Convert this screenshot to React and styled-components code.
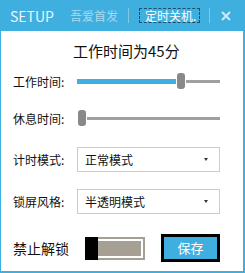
import styled, { createGlobalStyle } from "styled-components";

const GlobalStyle = createGlobalStyle`
  html, body {
    margin: 0;
    padding: 0;
    background: #ffffff;
  }
  body {
    font-family: "Noto Sans CJK SC", "Microsoft YaHei", "Liberation Sans", sans-serif;
  }
`;

const BLUE = "#3fafe0";

const Window = styled.div`
  width: 245px;
  height: 273px;
  box-sizing: border-box;
  border: 1px solid ${BLUE};
  border-top: none;
  border-right-width: 2px;
  border-bottom-width: 2px;
  display: flex;
  flex-direction: column;
  background: #fff;
`;

const Header = styled.div`
  height: 31px;
  margin: 0 -2px 0 -1px;
  background: ${BLUE};
  display: flex;
  align-items: center;
  padding-left: 10px;
`;

const Brand = styled.div`
  font-size: 14px;
  color: #e8f5fc;
  margin-right: 15px;
`;

const Tab = styled.div`
  font-size: 12px;
  line-height: 13px;
  color: ${(p) => (p.active ? "#ffffff" : "#a8d9f0")};
  padding: ${(p) => (p.active ? "0 3px 0 5px" : "0")};
  border: 1px dashed ${(p) => (p.active ? "#1f4d6b" : "transparent")};
`;

const Sep = styled.div`
  width: 1px;
  height: 15px;
  background: #7fc8ea;
  margin: 0 ${(p) => p.right}px 0 ${(p) => p.left}px;
`;

const Close = styled.svg`
  width: 10px;
  height: 10px;
`;

const Body = styled.div`
  display: flex;
  flex-direction: column;
  padding-left: 12px;
`;

const Title = styled.div`
  margin-top: 10px;
  height: 20px;
  line-height: 20px;
  font-size: 15px;
  color: #111;
  padding-left: 60px;
`;

const Row = styled.div`
  display: flex;
  align-items: center;
  margin-top: ${(p) => p.top}px;
  height: ${(p) => p.h}px;
`;

const Label = styled.div`
  width: ${(p) => p.w || 64}px;
  flex-shrink: 0;
  font-size: ${(p) => p.size || 12}px;
  color: #111;
`;

const SliderBox = styled.div`
  width: 143px;
  display: flex;
  align-items: center;
`;

const Fill = styled.div`
  height: 5px;
  background: ${BLUE};
`;

const Thumb = styled.div`
  width: 8px;
  height: 16px;
  border-radius: 3px;
  background: #898989;
  margin: 0 1px;
  flex-shrink: 0;
`;

const Rest = styled.div`
  flex: 1;
  height: 3px;
  background: #a0a0a0;
`;

const Select = styled.div`
  width: 143px;
  height: 25px;
  box-sizing: border-box;
  border: 1px solid #cccccc;
  display: flex;
  align-items: center;
  justify-content: space-between;
  padding: 0 11px 0 7px;
  font-size: 12px;
  color: #111;
`;

const Arrow = styled.div`
  width: 0;
  height: 0;
  border-left: 2.5px solid transparent;
  border-right: 2.5px solid transparent;
  border-top: 3.5px solid #333;
`;

const Toggle = styled.div`
  width: 60px;
  height: 23px;
  box-sizing: border-box;
  border: 2px solid #a59f94;
  padding: 2px;
  position: relative;
  background: #fff;
`;

const ToggleTrack = styled.div`
  height: 100%;
  background: #a59f94;
`;

const Knob = styled.div`
  position: absolute;
  left: -2px;
  top: -2px;
  bottom: -2px;
  width: 13px;
  background: #000;
`;

const SaveButton = styled.button`
  all: unset;
  margin-left: 16px;
  width: 59px;
  height: 28px;
  box-sizing: border-box;
  border: 3px solid #000;
  background: ${BLUE};
  color: #fff;
  font-size: 13px;
  text-align: center;
  line-height: 22px;
  font-family: "Noto Sans CJK SC", sans-serif;
`;

const Slider = ({ value, max }) => (
  <SliderBox>
    <Fill style={{ width: `${(value / max) * 132}px` }} />
    <Thumb />
    <Rest />
  </SliderBox>
);

const App = () => {
  const work = 45;
  const rest = 0;

  return (
    <>
      <GlobalStyle />
      <Window>
        <Header>
          <Brand>SETUP</Brand>
          <Tab>吾爱首发</Tab>
          <Sep left={9} right={10} />
          <Tab active>定时关机.</Tab>
          <Sep left={9} right={11} />
          <Close viewBox="0 0 10 10">
            <path d="M1 1 L9 9 M9 1 L1 9" stroke="#d0eaf7" strokeWidth="2" />
          </Close>
        </Header>
        <Body>
          <Title>工作时间为{work}分</Title>
          <Row top={10} h={20}>
            <Label>工作时间:</Label>
            <Slider value={work} max={60} />
          </Row>
          <Row top={17} h={20}>
            <Label>休息时间:</Label>
            <Slider value={rest} max={60} />
          </Row>
          <Row top={19} h={25}>
            <Label>计时模式:</Label>
            <Select>
              正常模式
              <Arrow />
            </Select>
          </Row>
          <Row top={17} h={25}>
            <Label>锁屏风格:</Label>
            <Select>
              半透明模式
              <Arrow />
            </Select>
          </Row>
          <Row top={20} h={28}>
            <Label w={72} size={14}>禁止解锁</Label>
            <Toggle>
              <ToggleTrack />
              <Knob />
            </Toggle>
            <SaveButton>保存</SaveButton>
          </Row>
        </Body>
      </Window>
    </>
  );
};

export default App;
